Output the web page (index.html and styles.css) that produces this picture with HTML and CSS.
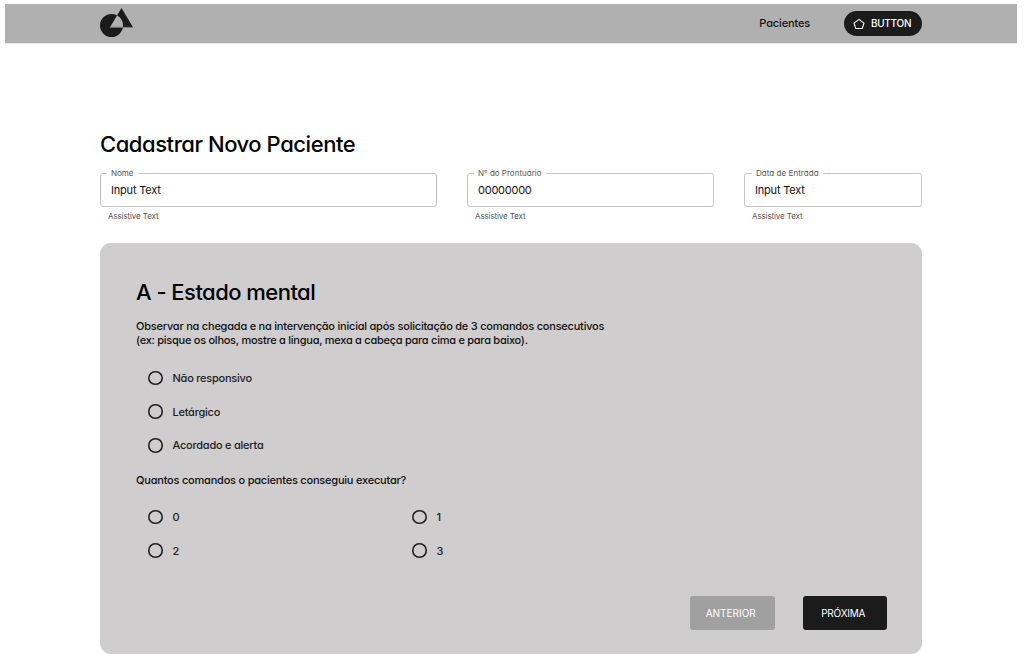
FILE: index.html
```html
<!DOCTYPE html>
<html lang="pt-BR">
<head>
<meta charset="utf-8">
<title>Cadastrar Novo Paciente</title>
<link rel="stylesheet" href="styles.css">
</head>
<body>
<header class="topbar">
  <svg class="logo" width="34" height="30" viewBox="0 0 34 30">
    <path fill="#1b1b1b" fill-rule="evenodd" d="M11.5 6a11.5 11.5 0 1 0 0 23a11.5 11.5 0 1 0 0-23zM10 19.2L21.5 0L33 19.2z"/>
    <path stroke="#777" stroke-width="1" d="M10 19.3H33"/>
  </svg>
  <nav class="nav">
    <a class="nav-link">Pacientes</a>
    <button class="pill">
      <svg width="12" height="12" viewBox="0 0 12 12"><path d="M6 1.4L11 5.1L9.2 10.5H2.8L1 5.1z" fill="none" stroke="#fff" stroke-width="1.1"/></svg>
      <span>BUTTON</span>
    </button>
  </nav>
</header>
<main class="page">
  <h1 class="title">Cadastrar Novo Paciente</h1>
  <div class="fields">
    <div class="field">
      <fieldset class="outline"><legend class="label">Nome</legend><span class="value">Input Text</span></fieldset>
      <p class="assist">Assistive Text</p>
    </div>
    <div class="field">
      <fieldset class="outline"><legend class="label">N° do Prontuário</legend><span class="value value-number">00000000</span></fieldset>
      <p class="assist">Assistive Text</p>
    </div>
    <div class="field">
      <fieldset class="outline"><legend class="label label-date">Data de Entrada</legend><span class="value">Input Text</span></fieldset>
      <p class="assist">Assistive Text</p>
    </div>
  </div>
  <section class="card">
    <h2 class="heading">A - Estado mental</h2>
    <p class="text"><span class="line-one">Observar na chegada e na intervenção inicial após solicitação de 3 comandos consecutivos</span><br><span class="line-two">(ex: pisque os olhos, mostre a língua, mexa a cabeça para cima e para baixo).</span></p>
    <div class="options">
      <label class="option"><i class="radio"></i><span>Não responsivo</span></label>
      <label class="option"><i class="radio"></i><span>Letárgico</span></label>
      <label class="option"><i class="radio"></i><span>Acordado e alerta</span></label>
    </div>
    <p class="text question">Quantos comandos o pacientes conseguiu executar?</p>
    <div class="options options-grid">
      <label class="option"><i class="radio"></i><span>0</span></label>
      <label class="option"><i class="radio"></i><span>1</span></label>
      <label class="option"><i class="radio"></i><span>2</span></label>
      <label class="option"><i class="radio"></i><span>3</span></label>
    </div>
    <div class="actions">
      <button class="btn btn-muted">ANTERIOR</button>
      <button class="btn btn-next">PRÓXIMA</button>
    </div>
  </section>
</main>
</body>
</html>
```
FILE: styles.css
```css
* { box-sizing: border-box; }
body {
  margin: 0;
  height: 655px;
  overflow: hidden;
  background: #fff;
  color: #111;
  font-family: Inter, "Liberation Sans", sans-serif;
  font-feature-settings: "cv11", "calt" 0;
  white-space: nowrap;
}
h1, h2, p { margin: 0; font-weight: 500; }
button { border: 0; font: inherit; font-feature-settings: inherit; color: #fff; }
.topbar {
  display: flex;
  justify-content: space-between;
  align-items: center;
  height: 39px;
  margin: 4px 8px 0 5px;
  padding: 0 95px;
  background: #b0b0b0;
  box-shadow: 0 1px 0 #e6e6e6;
}
.logo { display: block; margin-bottom: 2px; }
.nav { display: flex; align-items: center; gap: 34px; }
.nav-link { padding-bottom: 1px; font-size: 11px; font-weight: 500; letter-spacing: -.15px; }
.pill {
  display: flex;
  align-items: center;
  gap: 6px;
  width: 78px;
  height: 25px;
  padding: 0 9px 1px;
  border-radius: 13px;
  background: #1b1b1b;
  font-size: 10px;
  font-weight: 450;
  letter-spacing: -.3px;
}
.pill svg { margin-top: 1px; }
.page { width: 822px; margin: 86px 0 0 100px; padding-top: 1px; }
.title { height: 29px; line-height: 28px; font-size: 22px; letter-spacing: -.44px; color: #000; }
.fields { display: grid; grid-template-columns: 337px 247px 178px; gap: 30px; height: 84px; padding-top: 9px; }
.outline {
  height: 39px;
  margin: 0;
  padding: 0 10px;
  border: 1px solid #c4c4c4;
  border-radius: 3px;
}
.label { margin-left: -4px; padding: 0 4px; height: 10px; line-height: 10px; font-size: 8px; color: #555; }
.label-date { margin-left: -3px; letter-spacing: .05px; }
.value { display: block; height: 24px; line-height: 24px; font-size: 11px; letter-spacing: -.2px; }
.value-number { letter-spacing: -.25px; }
.assist { padding: 4px 0 0 8px; line-height: 10px; font-size: 8px; font-weight: 400; letter-spacing: -.12px; color: #555; }
.card { height: 411px; padding: 34px 35px 0 36px; border-radius: 11px; background: #cfcdce; }
.heading { height: 31px; line-height: 30px; font-size: 22px; letter-spacing: -.54px; color: #000; }
.text { margin-top: 12px; line-height: 13.5px; font-size: 11px; letter-spacing: -.22px; }
.line-two { letter-spacing: -.26px; }
.options { display: grid; grid-auto-rows: 33.8px; padding: 14px 0 0 12px; }
.option { display: flex; align-items: center; gap: 10px; font-size: 11px; font-weight: 450; letter-spacing: -.24px; color: #222; }
.radio { width: 14.5px; height: 14.5px; border-radius: 50%; box-shadow: inset 0 0 0 1.6px #222; }
.question { margin-top: 12px; letter-spacing: -.21px; }
.options-grid { grid-template-columns: 264px 1fr; padding-top: 12px; }
.actions { display: flex; justify-content: flex-end; gap: 28px; margin-top: 29px; }
.btn { width: 84.5px; height: 34px; padding: 0 0 1px; border-radius: 3px; background: #1b1b1b; font-size: 10px; }
.btn-muted { padding-right: 3px; background: #a0a0a0; }
.btn-next { padding-right: 3px; letter-spacing: -.2px; }
```
